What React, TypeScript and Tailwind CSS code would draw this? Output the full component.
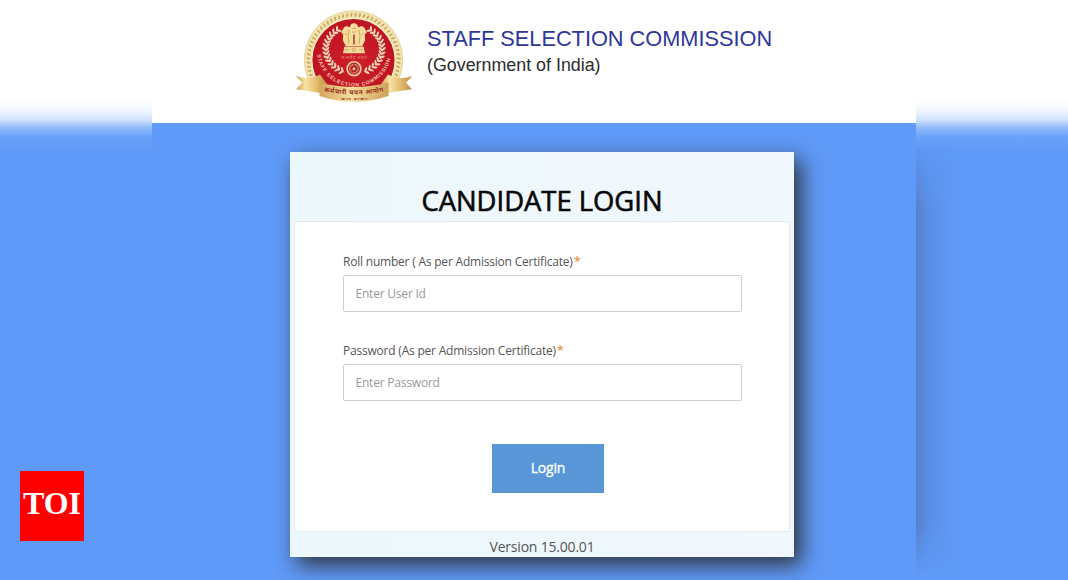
import React from "react";

const beads = Array.from({ length: 46 }, (_, i) => {
  const a = ((150 + (i * 240) / 45) * Math.PI) / 180;
  return { x: 353.5 + 45.2 * Math.cos(a), y: 60 + 45.2 * Math.sin(a), r: (a * 180) / Math.PI };
});

const leaves = Array.from({ length: 14 }, (_, i) => {
  const a = ((112 + (i * 118) / 13) * Math.PI) / 180;
  return { x: 354.5 + 28.5 * Math.cos(a), y: 49.5 + 24 * Math.sin(a), r: (a * 180) / Math.PI };
});

function Laurel() {
  return (
    <g fill="#f0d3b4">
      {leaves.map((l, i) => (
        <g key={i} transform={`translate(${l.x} ${l.y}) rotate(${l.r})`}>
          <ellipse cx="2.6" cy="0.8" rx="2.9" ry="1.1" transform="rotate(42)" />
          <ellipse cx="-2.6" cy="0.8" rx="2.8" ry="1.1" transform="rotate(-42)" />
        </g>
      ))}
    </g>
  );
}

function Emblem() {
  return (
    <svg className="block h-[104px] w-[128px] shrink-0" viewBox="290 4 128 104">
      <defs>
        <linearGradient id="gold" x1="0" x2="1">
          <stop offset="0" stopColor="#c99a4c" />
          <stop offset=".3" stopColor="#f7e4a4" />
          <stop offset=".6" stopColor="#e5c173" />
          <stop offset="1" stopColor="#c08d42" />
        </linearGradient>
        <linearGradient id="band" x1="0" x2="1">
          <stop offset="0" stopColor="#d3a55c" />
          <stop offset=".45" stopColor="#f5dfa0" />
          <stop offset="1" stopColor="#cfa158" />
        </linearGradient>
        <radialGradient id="red">
          <stop offset="0" stopColor="#cf1f2b" />
          <stop offset="1" stopColor="#bd1422" />
        </radialGradient>
        <clipPath id="disc">
          <rect x="290" y="4" width="128" height="84" />
        </clipPath>
        <path id="motto" d="M317 51 A37 35.5 0 0 0 391.5 51" />
        <path id="bandText" d="M324 91.6 Q354 97.4 384 91.6" />
      </defs>
      <g clipPath="url(#disc)">
        <circle cx="353.5" cy="60" r="49.2" fill="#f3e4af" stroke="#dfc684" strokeWidth=".7" />
        {beads.map((b, i) => (
          <rect key={i} x="-2" y="-.85" width="4" height="1.7" rx=".8" fill="#c7a75c" transform={`translate(${b.x} ${b.y}) rotate(${b.r + 12})`} />
        ))}
        <circle cx="353.5" cy="60" r="42" fill="#fff4cf" />
        <circle cx="353.5" cy="60" r="41.1" fill="url(#red)" />
      </g>
      <Laurel />
      <g transform="translate(708 0) scale(-1 1)"><Laurel /></g>
      <g fill="#f5dc9b">
        <path d="M343.4 28.5 Q344.3 25.8 347.5 26.3 L349.6 27.4 Q350.7 23.3 354 23.3 Q357.3 23.3 358.4 27.4 L360.5 26.3 Q364 25.8 364.8 28.5 L366.9 32.2 L364.8 34.6 L365.2 40.2 L362.2 46 H345.8 L342.8 40.2 L343.2 34.6 L341.1 32.2 Z" />
        <path d="M344.4 46.5 H363.6 L365 53.2 H343 Z" />
      </g>
      <g fill="none" stroke="#cf9653" strokeWidth=".8">
        <path d="M349.2 30 L348 36 L349 44 M358.8 30 L360 36 L359 44 M345 33 L347 35 M363 33 L361 35" />
        <path d="M352.2 28.5 H355.8 M352 31.5 Q354 33.5 356 31.5" />
        <path d="M344.6 49.8 H349 M359 49.8 H363.4" />
      </g>
      <path d="M354 34.5 V44.5" stroke="#a53a29" strokeWidth="1.5" />
      <circle cx="354" cy="49.6" r="1.6" fill="none" stroke="#bd7740" strokeWidth=".6" />
      <text x="354" y="58.8" textAnchor="middle" fill="#e08f78" fontSize="4" textLength="25" className="font-['Noto_Sans_Devanagari','Noto_Sans',sans-serif]">सत्यमेव जयते</text>
      <circle cx="354" cy="68.7" r="6.9" fill="#b8212a" stroke="#f0cda1" strokeWidth="1.6" />
      <circle cx="354" cy="68.7" r="4.2" fill="none" stroke="#e2a780" strokeWidth="1.7" strokeDasharray=".8 .65" />
      <circle cx="354" cy="68.7" r="1.5" fill="#f0cda1" />
      <text fill="#f6c6ad" fontSize="5.2" fontWeight="700" className="font-['Liberation_Sans',sans-serif]">
        <textPath href="#motto" startOffset="3.5" textLength="103">STAFF SELECTION COMMISSION</textPath>
      </text>
      <path d="M295.8 76 Q309 80.5 320 74.5 L328 85.5 L320 93 Q309 90.7 296 89.3 L302 82.8 Z" fill="url(#gold)" />
      <path d="M412.2 76 Q399 80.5 388 74.5 L380 85.5 L388 93 Q399 90.7 412 89.3 L406 82.8 Z" fill="url(#gold)" />
      <path d="M320 83.5 L328 86 L320 91 Z M388 83.5 L380 86 L388 91 Z" fill="#96612c" />
      <path d="M319.5 82.6 Q354 91.5 388.5 82.6 V96 Q354 107.5 319.5 96 Z" fill="url(#band)" />
      <g fill="#9c3520" fontWeight="700" className="font-['Noto_Sans_Devanagari','Noto_Sans',sans-serif]">
        <text fontSize="6.4"><textPath href="#bandText" textLength="60">कर्मचारी चयन आयोग</textPath></text>
        <text x="354" y="100.2" textAnchor="middle" fontSize="3.6" textLength="26">भारत सरकार</text>
      </g>
    </svg>
  );
}

function Field({ label, placeholder, type }: { label: string; placeholder: string; type: string }) {
  return (
    <label className="block text-[12px] leading-[18px] text-[#555]">
      <span className="block whitespace-nowrap tracking-[-0.21px]">
        {label}
        <span className="ml-px text-[13px] font-semibold leading-none text-[#e39a45]">*</span>
      </span>
      <input
        type={type}
        placeholder={placeholder}
        className="mt-[4px] block h-[37px] w-[399px] rounded-[2px] border border-[#d0cfd0] bg-white px-[11.5px] text-[12px] tracking-[-0.21px] placeholder:text-[#999]"
      />
    </label>
  );
}

export default function App() {
  return (
    <div className="relative flex h-[580px] w-[1068px] overflow-hidden bg-[#5f9af8] font-['Open_Sans',sans-serif]">
      <div className="w-[152px] shrink-0 bg-[linear-gradient(to_bottom,#fff_98px,#f3f8fe_110px,#cfe1fd_120px,#90bafb_128px,#6ca3f9_136px,#5f9af8_149px)]" />

      <main className="flex w-[764px] shrink-0 flex-col overflow-hidden bg-[#5f9af8]">
        <header className="flex h-[123px] shrink-0 items-start bg-white pl-[138px] pt-[4px]">
          <Emblem />
          <div className="pl-[9px] pt-[21px] font-['Liberation_Sans',sans-serif] whitespace-nowrap">
            <h1 className="text-[21.76px] leading-[28px] text-[#2e3699]">STAFF SELECTION COMMISSION</h1>
            <p className="text-[17.85px] leading-[24px] text-[#2c2c2c]">(Government of India)</p>
          </div>
        </header>

        <section className="ml-[138px] mt-[29px] flex h-[405px] w-[504px] shrink-0 flex-col bg-[linear-gradient(to_right,#edf8fc,#f0f7fd)] px-[4px] shadow-[7px_8px_20px_0px_rgba(45,45,50,0.95)]">
          <h2 className="h-[69px] pt-[30px] text-center text-[27.4px] leading-[37px] text-[#080808] [-webkit-text-stroke:0.6px_#080808]">CANDIDATE LOGIN</h2>
          <form className="flex h-[311px] flex-col border border-[#e1ebf0] bg-white pl-[48px] pt-[31px]">
            <Field label="Roll number ( As per Admission Certificate)" placeholder="Enter User Id" type="text" />
            <div className="mt-[30px]">
              <Field label="Password (As per Admission Certificate)" placeholder="Enter Password" type="password" />
            </div>
            <button type="button" className="ml-[149px] mt-[43px] h-[49px] w-[112px] bg-[#5896d7] pb-[2px] text-[14px] tracking-[-0.2px] text-white [-webkit-text-stroke:0.3px_#fff]">
              Login
            </button>
          </form>
          <p className="pt-[5px] text-center text-[14px] leading-[20px] tracking-[-0.2px] text-[#555]">Version 15.00.01</p>
        </section>
      </main>

      <div className="flex w-[152px] shrink-0 flex-col bg-[linear-gradient(to_bottom,#fff_98px,#f3f8fe_110px,#cfe1fd_120px,#90bafb_128px,#6ca3f9_136px,#5f9af8_149px)] pt-[140px]">
        <div className="h-[440px] w-[38px] bg-[linear-gradient(to_right,#5680cb,#5b8fe5_35%,#5f9af800)] [mask-image:linear-gradient(to_bottom,transparent,black_70px,black_385px,transparent_435px)]" />
      </div>

      <div className="absolute left-[20px] top-[471px] flex h-[70px] w-[64px] justify-center bg-[#fe0000] pt-[13px] font-['Liberation_Serif',serif] text-[32px] font-bold leading-[38px] text-white">
        TOI
      </div>
    </div>
  );
}
